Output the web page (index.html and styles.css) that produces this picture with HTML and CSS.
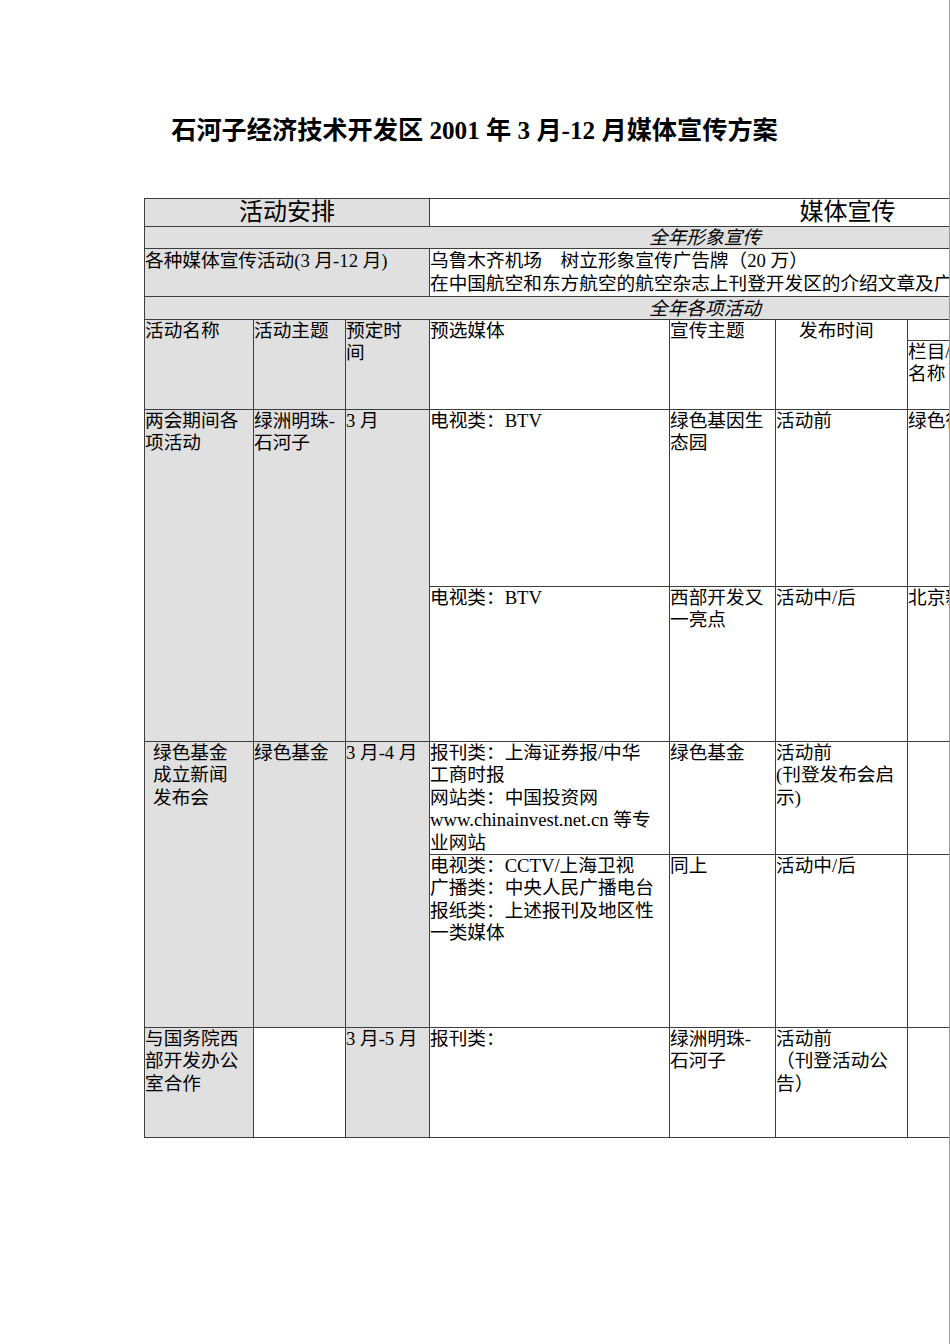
FILE: index.html
```html
<!DOCTYPE html>
<html lang="zh-CN">
<head>
<meta charset="utf-8">
<title>石河子经济技术开发区媒体宣传方案</title>
<link rel="stylesheet" href="styles.css">
</head>
<body>
<div class="page">
  <h1 class="title">石河子经济技术开发区 2001 年 3 月-12 月媒体宣传方案</h1>
  <table class="plan">
    <colgroup>
      <col class="c1"><col class="c2"><col class="c3"><col class="c4"><col class="c5"><col class="c6"><col class="c7">
    </colgroup>
    <tr class="r1">
      <td colspan="3" class="big gray">活动安排</td>
      <td colspan="4" class="big">媒体宣传</td>
    </tr>
    <tr class="r2">
      <td colspan="7" class="band gray">全年形象宣传</td>
    </tr>
    <tr class="r3">
      <td colspan="3" class="gray">各种媒体宣传活动(3 月-12 月)</td>
      <td colspan="4" class="nowrap">乌鲁木齐机场　树立形象宣传广告牌（20 万）<br>在中国航空和东方航空的航空杂志上刊登开发区的介绍文章及广告</td>
    </tr>
    <tr class="r4">
      <td colspan="7" class="band gray">全年各项活动</td>
    </tr>
    <tr class="r5">
      <td rowspan="2" class="gray">活动名称</td>
      <td rowspan="2" class="gray">活动主题</td>
      <td rowspan="2" class="gray">预定时<br>间</td>
      <td rowspan="2">预选媒体</td>
      <td rowspan="2">宣传主题</td>
      <td rowspan="2" class="indent">发布时间</td>
      <td></td>
    </tr>
    <tr class="r6">
      <td>栏目/<br>名称</td>
    </tr>
    <tr class="r7">
      <td rowspan="2" class="gray">两会期间各<br>项活动</td>
      <td rowspan="2" class="gray">绿洲明珠-<br>石河子</td>
      <td rowspan="2" class="gray">3 月</td>
      <td>电视类：BTV</td>
      <td>绿色基因生<br>态园</td>
      <td>活动前</td>
      <td class="nowrap">绿色行动专题</td>
    </tr>
    <tr class="r8">
      <td>电视类：BTV</td>
      <td>西部开发又<br>一亮点</td>
      <td>活动中/后</td>
      <td class="nowrap">北京新闻</td>
    </tr>
    <tr class="r9">
      <td rowspan="2" class="gray pad8">绿色基金<br>成立新闻<br>发布会</td>
      <td rowspan="2" class="gray">绿色基金</td>
      <td rowspan="2" class="gray">3 月-4 月</td>
      <td>报刊类：上海证券报/中华<br>工商时报<br>网站类：中国投资网<br>www.chinainvest.net.cn 等专<br>业网站</td>
      <td>绿色基金</td>
      <td>活动前<br>(刊登发布会启<br>示)</td>
      <td></td>
    </tr>
    <tr class="r10">
      <td>电视类：CCTV/上海卫视<br>广播类：中央人民广播电台<br>报纸类：上述报刊及地区性<br>一类媒体</td>
      <td>同上</td>
      <td>活动中/后</td>
      <td></td>
    </tr>
    <tr class="r11">
      <td class="gray">与国务院西<br>部开发办公<br>室合作</td>
      <td></td>
      <td class="gray">3 月-5 月</td>
      <td>报刊类：</td>
      <td>绿洲明珠-<br>石河子</td>
      <td>活动前<br>（刊登活动公<br>告）</td>
      <td></td>
    </tr>
  </table>
</div>
</body>
</html>
```
FILE: styles.css
```css
html, body {
  margin: 0;
  padding: 0;
  background: #ffffff;
  overflow: hidden;
}

.page {
  box-sizing: border-box;
  width: 950px;
  height: 1344px;
  padding-top: 116px;
  overflow: hidden;
  border-right: 1px solid #9a9a9a;
  font-family: "Liberation Serif", "Noto Sans CJK SC", serif;
  color: #000;
}

.title {
  margin: 0;
  font-size: 25.2px;
  line-height: 30px;
  font-weight: bold;
  text-align: center;
  white-space: nowrap;
}

.plan {
  margin: 52px 0 0 144px;
  border-collapse: collapse;
  table-layout: fixed;
  width: 1121px;
  font-size: 18.67px;
  line-height: 22.4px;
}

.plan col.c1 { width: 109px; }
.plan col.c2 { width: 92px; }
.plan col.c3 { width: 84px; }
.plan col.c4 { width: 240px; }
.plan col.c5 { width: 106px; }
.plan col.c6 { width: 132px; }
.plan col.c7 { width: 358px; }

.plan td {
  border: 1px solid #3e3e3e;
  padding: 0 9px 0 0;
  vertical-align: top;
  text-align: left;
  background: #ffffff;
  overflow: hidden;
}

.plan td.gray {
  background: #e0e0e0;
}

.plan td.big {
  font-size: 24px;
  line-height: 27px;
  text-align: center;
  vertical-align: middle;
  padding: 0;
}

.plan td.band {
  font-style: italic;
  text-align: center;
  vertical-align: middle;
  padding: 0;
  line-height: 21px;
}

.plan tr.r3 td {
  line-height: 23px;
}

.plan td.nowrap {
  white-space: nowrap;
}

.plan td.indent {
  padding-left: 23px;
}

.plan td.pad8 {
  padding-left: 8px;
}

.r1 { height: 28px; }
.r2 { height: 22px; }
.r3 { height: 48px; }
.r4 { height: 23px; }
.r5 { height: 21px; }
.r6 { height: 69px; }
.r7 { height: 177px; }
.r8 { height: 155px; }
.r9 { height: 113px; }
.r10 { height: 173px; }
.r11 { height: 110px; }
```
